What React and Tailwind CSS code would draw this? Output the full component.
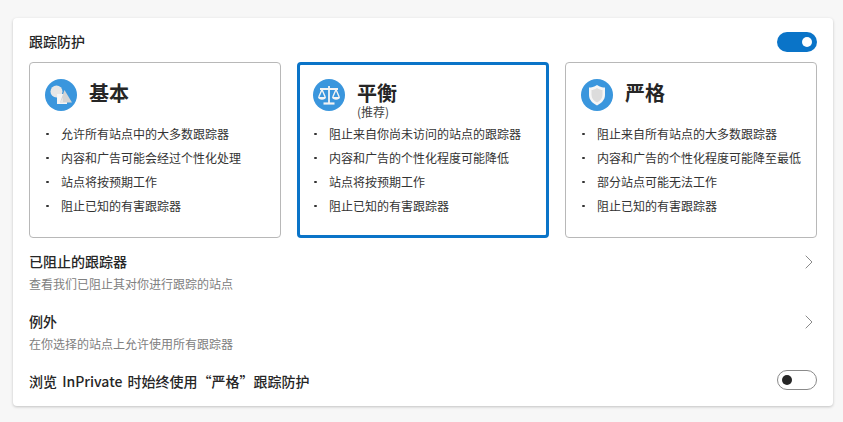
const font = { fontFamily: '"Noto Sans CJK SC", "Noto Sans", sans-serif' };

function BasicIcon() {
  return (
    <svg viewBox="0 0 32 32" className="w-8 h-8 shrink-0">
      <circle cx="16" cy="16" r="16" fill="#3a96dd" />
      <circle cx="11.5" cy="12.5" r="6" fill="#e6e6e6" />
      <rect x="12" y="15" width="10" height="10" fill="#f4f4f4" />
      <path d="M19.5 11 L27 23.5 H15 Z" fill="#d4d4d4" />
      <path d="M15 23.5 L18 18.5 V23.5 Z" fill="#e6e6e6" />
    </svg>
  );
}

function ScaleIcon() {
  return (
    <svg viewBox="0 0 32 32" className="w-8 h-8 shrink-0">
      <circle cx="16" cy="16" r="16" fill="#3a96dd" />
      <g stroke="#f4f4f4" strokeWidth="1.4" fill="none">
        <path d="M16 7 V24" strokeWidth="1.8" />
        <path d="M7 10 H25" strokeWidth="2" />
        <path d="M10.5 24.5 H21.5" strokeWidth="2.2" />
        <path d="M9 10.5 L5.8 18 M9 10.5 L12.2 18" />
        <path d="M23 10.5 L19.8 18 M23 10.5 L26.2 18" />
      </g>
      <path d="M5 18 H13 C13 21.5 5 21.5 5 18 Z" fill="#f4f4f4" />
      <path d="M19 18 H27 C27 21.5 19 21.5 19 18 Z" fill="#f4f4f4" />
    </svg>
  );
}

function ShieldIcon() {
  return (
    <svg viewBox="0 0 32 32" className="w-8 h-8 shrink-0">
      <circle cx="16" cy="16" r="16" fill="#3a96dd" />
      <path d="M16 6 C19 8 21.5 8.5 24 8.5 V16 C24 21 20.5 24 16 26.5 C11.5 24 8 21 8 16 V8.5 C10.5 8.5 13 8 16 6 Z" fill="#f6f6f6" />
      <path d="M16 9 C18.5 10.5 20 11 21.5 11 V16 C21.5 19.5 19 22 16 23.5 C13 22 10.5 19.5 10.5 16 V11 C12 11 13.5 10.5 16 9 Z" fill="#dcdcdc" />
    </svg>
  );
}

function Chevron() {
  return (
    <svg viewBox="0 0 8 14" className="w-[8px] h-[14px] shrink-0 mr-[4px] mt-[4px]">
      <path d="M0.7 0.7 L7 7 L0.7 13.3" fill="none" stroke="#8a8a8a" strokeWidth="1" />
    </svg>
  );
}

function OptionCard({ icon, title, sub, items, selected }) {
  return (
    <div
      className={
        selected
          ? "w-[252px] h-[176px] rounded-[4px] border-[3px] border-[#0a74c8] pl-[13px] pr-2 pt-[14px]"
          : "w-[252px] h-[176px] rounded-[4px] border border-[#b8b8b8] pl-[15px] pr-2 pt-4"
      }
    >
      <div className="flex items-start gap-3 h-[44px]">
        {icon}
        <div className="flex flex-col">
          <div className="text-[20px] leading-[26px] pt-[1px] font-bold text-[#262626]">{title}</div>
          {sub && <div className="text-[12px] leading-[12px] text-[#444444]">{sub}</div>}
        </div>
      </div>
      <ul className="flex flex-col -mt-[1px]">
        {items.map((t) => (
          <li key={t} className="flex h-[24px] items-center text-[12px] text-[#333333]">
            <span className="w-[2.5px] h-[2.5px] rounded-full bg-[#333333] ml-[1px] mr-[12.5px]" />
            <span>{t}</span>
          </li>
        ))}
      </ul>
    </div>
  );
}

function LinkRow({ title, sub, className }) {
  return (
    <div className={"flex items-start justify-between " + className}>
      <div className="flex flex-col">
        <div className="text-[14px] leading-[20px] font-medium text-[#262626]">{title}</div>
        <div className="text-[12px] leading-[20px] mt-[3px] text-[#808080]">{sub}</div>
      </div>
      <Chevron />
    </div>
  );
}

export default function App() {
  return (
    <div style={font} className="w-[843px] h-[422px] bg-[#f7f7f7] pt-[18px] px-[13px] overflow-hidden">
      <div className="w-[820px] h-[388px] bg-white rounded-[4px] shadow-[0_1px_3px_rgba(0,0,0,0.22)] px-4 pt-[14px]">
        <div className="flex items-center justify-between h-[20px]">
          <div className="text-[14px] leading-[20px] font-medium text-[#262626] pb-[2px]">跟踪防护</div>
          <div className="w-[40px] h-[20px] rounded-full bg-[#0a74c8] flex items-center justify-end pr-[5px]">
            <div className="w-[10px] h-[10px] rounded-full bg-white" />
          </div>
        </div>
        <div className="flex gap-4 mt-[10px]">
          <OptionCard
            icon={<BasicIcon />}
            title="基本"
            items={["允许所有站点中的大多数跟踪器", "内容和广告可能会经过个性化处理", "站点将按预期工作", "阻止已知的有害跟踪器"]}
          />
          <OptionCard
            selected
            icon={<ScaleIcon />}
            title="平衡"
            sub="(推荐)"
            items={["阻止来自你尚未访问的站点的跟踪器", "内容和广告的个性化程度可能降低", "站点将按预期工作", "阻止已知的有害跟踪器"]}
          />
          <OptionCard
            icon={<ShieldIcon />}
            title="严格"
            items={["阻止来自所有站点的大多数跟踪器", "内容和广告的个性化程度可能降至最低", "部分站点可能无法工作", "阻止已知的有害跟踪器"]}
          />
        </div>
        <LinkRow className="mt-[13px]" title="已阻止的跟踪器" sub="查看我们已阻止其对你进行跟踪的站点" />
        <LinkRow className="mt-[17px]" title="例外" sub="在你选择的站点上允许使用所有跟踪器" />
        <div className="flex items-center justify-between mt-[16px] h-[20px]">
          <div className="text-[14px] leading-[20px] font-medium text-[#262626] pt-[2px] [word-spacing:2px]">浏览 InPrivate 时始终使用“严格”跟踪防护</div>
          <div className="w-[40px] h-[20px] rounded-full border border-[#8a8a8a] flex items-center pl-[4px]">
            <div className="w-[10px] h-[10px] rounded-full bg-[#262626]" />
          </div>
        </div>
      </div>
    </div>
  );
}
